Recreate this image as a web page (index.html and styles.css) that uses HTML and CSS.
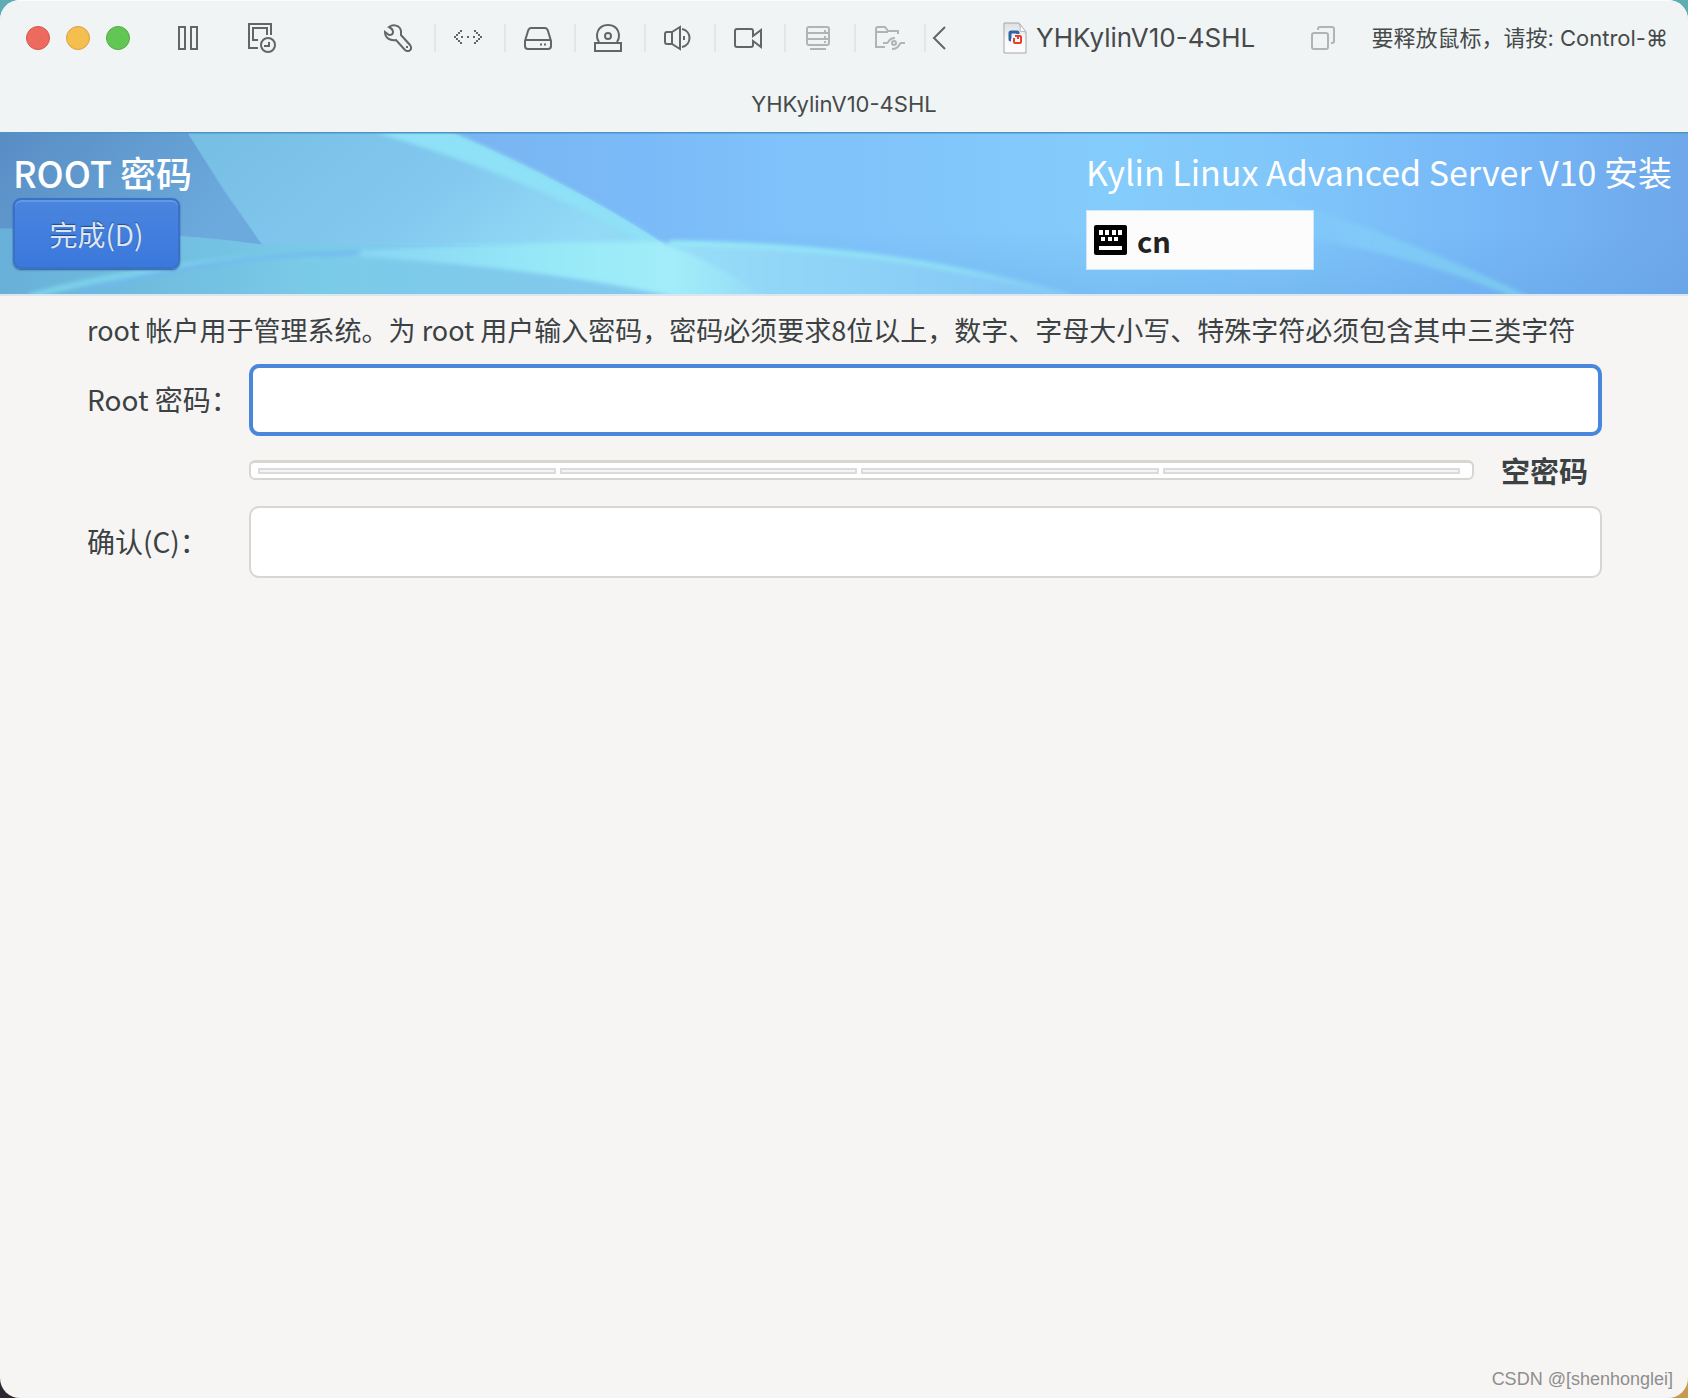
FILE: index.html
```html
<!DOCTYPE html>
<html lang="zh-CN">
<head>
<meta charset="utf-8">
<meta name="viewport" content="width=device-width, initial-scale=1">
<title>YHKylinV10-4SHL</title>
<link rel="stylesheet" href="styles.css">
</head>
<body>
<div class="window">
  <header class="chrome">
    <div class="toolbar">
      <div class="lights">
        <button class="light light-close" aria-label="关闭"></button>
        <button class="light light-min" aria-label="最小化"></button>
        <button class="light light-zoom" aria-label="缩放"></button>
      </div>
      <button class="tool tool-pause" aria-label="暂停">
        <svg width="20" height="24" viewBox="0 0 20 24"><path d="M1 1h6v22H1zM13 1h6v22h-6z"/></svg>
      </button>
      <button class="tool tool-snapshot" aria-label="快照">
        <svg width="28" height="30" viewBox="0 0 28 30"><path d="M10 25H1V1h22v11M10 17H5V5h14v7"/><circle cx="20" cy="22" r="7"/><path d="M21 19v4h-5"/></svg>
      </button>
      <div class="devices">
        <button class="device" aria-label="设置">
          <svg width="28" height="28" viewBox="0 0 28 28"><path d="M5 3C9 0 16 1 17 7L17 11L26 21C29 25 25 29 21 26L12 16C6 17 1 14 1 8L5 11Q9 11 9 8Q9 5 5 3Z"/><path d="M22 23h2"/></svg>
        </button>
        <button class="device" aria-label="网络">
          <svg width="30" height="16" viewBox="0 0 30 16"><path d="M7 1h2M5 3h2M3 5h2M1 7h2M3 9h2M5 11h2M7 13h2M8 7h2M14 7h2M20 7h2M21 1h2M23 3h2M25 5h2M27 7h2M25 9h2M23 11h2M21 13h2"/></svg>
        </button>
        <button class="device" aria-label="硬盘">
          <svg width="28" height="24" viewBox="0 0 28 24"><path d="M7 2h14q2 0 3 3l3 10v5q0 3-3 3H4q-3 0-3-3v-5L4 5q1-3 3-3zM2 14h24M16 18.500h2M20 18.500h2"/></svg>
        </button>
        <button class="device" aria-label="光盘">
          <svg width="28" height="28" viewBox="0 0 28 28"><path d="M5 18C1 12 3 1 14 1s13 11 9 17"/><circle cx="14" cy="12" r="3"/><path d="M1 19h26v8H1z"/></svg>
        </button>
        <button class="device" aria-label="声音">
          <svg width="28" height="26" viewBox="0 0 28 26"><path d="M1 9q0-2 2-2h5l8-5v22l-8-5H3q-2 0-2-2zM8 7v12M18 4c10 2 10 16 0 18M20 11v4"/></svg>
        </button>
        <button class="device" aria-label="摄像头">
          <svg width="28" height="22" viewBox="0 0 28 22"><path d="M3 2h14q2 0 2 2v5l8-6v17l-8-6v4q0 2-2 2H3q-2 0-2-2V4q0-2 2-2z"/></svg>
        </button>
        <button class="device device-off" aria-label="打印机" disabled>
          <svg width="24" height="24" viewBox="0 0 24 24"><path d="M3 1h18q2 0 2 2v14q0 2-2 2H3q-2 0-2-2V3q0-2 2-2zM1 7h22M1 13h22M4 23h16M18 5h2M18 11h2M18 16h2"/></svg>
        </button>
        <button class="device device-off device-share" aria-label="共享文件夹" disabled>
          <svg width="30" height="24" viewBox="0 0 30 24"><path d="M10 21H1V3q0-2 2-2h7l3 4h10v3M1 6h12M8 17h4c2 0 1-5 8-5M30 17h-4c-2 0-1 6-9 6"/><circle cx="19" cy="17" r="2"/></svg>
        </button>
      </div>
      <button class="tool tool-back" aria-label="收起">
        <svg width="14" height="24" viewBox="0 0 14 24"><path d="M13 1L2 12l11 11"/></svg>
      </button>
      <div class="doc">
        <svg class="doc-icon" width="24" height="32" viewBox="0 0 24 32">
          <defs><linearGradient id="page" x1="0" x2="0" y1="0" y2="1"><stop offset="0" stop-color="#dedfe0"/><stop offset=".6" stop-color="#fbfbfb"/></linearGradient></defs>
          <path class="doc-page" d="M1 1h15l7 9v21H1z"/>
          <path class="doc-fold" d="M16 1q2 4 1 8l6 1z"/>
          <path class="doc-blue" d="M8 18q-1 0-1-1v-6q0-1 1-1h6q1 0 1 1v1"/>
          <path class="doc-red" d="M16 14h1q1 0 1 1v5q0 1-1 1h-5q-1 0-1-1v-4M15 17v-3h-3"/>
        </svg>
        <span class="doc-name">YHKylinV10-4SHL</span>
      </div>
      <button class="tool tool-copy" aria-label="窗口">
        <svg width="24" height="24" viewBox="0 0 24 24"><rect x="1" y="7" width="16" height="16" rx="2"/><path d="M7 4V3q0-2 2-2h12q2 0 2 2v12q0 2-2 2h-1"/></svg>
      </button>
      <p class="hint">要释放鼠标，请按: Control-⌘</p>
    </div>
    <h1 class="title">YHKylinV10-4SHL</h1>
  </header>

  <section class="banner">
    <svg class="banner-art" viewBox="0 0 1688 161" preserveAspectRatio="none" aria-hidden="true">
      <defs>
        <linearGradient id="sky" x1="0" x2="1">
          <stop offset="0" stop-color="#62acd8"/><stop offset=".13" stop-color="#77bce4"/><stop offset=".27" stop-color="#78b4f1"/>
          <stop offset=".38" stop-color="#7bbaf8"/><stop offset=".46" stop-color="#7fc1fa"/><stop offset=".66" stop-color="#84ccfb"/>
          <stop offset=".76" stop-color="#80c6fa"/><stop offset=".88" stop-color="#77b8f8"/><stop offset="1" stop-color="#6ea8ea"/>
        </linearGradient>
        <linearGradient id="dusk" x1="0" x2="1" y2=".4">
          <stop offset="0" stop-color="#588dc4"/><stop offset="1" stop-color="#6caadd"/>
        </linearGradient>
        <linearGradient id="veil" x1="0" x2="1" y2=".3">
          <stop offset="0" stop-color="#77bee3"/><stop offset=".6" stop-color="#82c8ef"/><stop offset="1" stop-color="#92daf6"/>
        </linearGradient>
        <linearGradient id="floor" x1="0" x2="1">
          <stop offset="0" stop-color="#68b0d8"/><stop offset=".45" stop-color="#7acbe8"/><stop offset="1" stop-color="#86c8f0"/>
        </linearGradient>
        <linearGradient id="wing" x1="0" x2="1">
          <stop offset="0" stop-color="#98def8"/><stop offset="1" stop-color="#82c4f6"/>
        </linearGradient>
        <linearGradient id="edge" gradientUnits="userSpaceOnUse" x1="665" x2="1070" y1="0" y2="0">
          <stop offset="0" stop-color="#98ecf8"/><stop offset=".7" stop-color="#90e0f6"/><stop offset="1" stop-color="#80c8f4"/>
        </linearGradient>
        <linearGradient id="wedge" x1="0" x2="1">
          <stop offset="0" stop-color="#84d0f2"/><stop offset=".55" stop-color="#97e9f8"/><stop offset=".8" stop-color="#a2edf9"/><stop offset="1" stop-color="#95daf7"/>
        </linearGradient>
        <linearGradient id="ray" x1="0" x2="1">
          <stop offset="0" stop-color="#84cdfa" stop-opacity="0"/><stop offset=".45" stop-color="#82cdf9" stop-opacity=".8"/><stop offset="1" stop-color="#78c9ee"/>
        </linearGradient>
        <linearGradient id="shade" x1="0" x2="0" y1="0" y2="1">
          <stop offset=".6" stop-color="#5f9fe0" stop-opacity="0"/><stop offset="1" stop-color="#5f9fe0" stop-opacity=".3"/>
        </linearGradient>
        <filter id="soft"><feGaussianBlur stdDeviation="2"/></filter>
      </defs>
      <rect width="1688" height="161" fill="url(#sky)"/>
      <rect width="1688" height="161" fill="url(#shade)"/>
      <path d="M187 0H450Q570 50 665 112L560 118 262 112Z" fill="url(#veil)"/>
      <path d="M0 0H187L225 60 262 112Q160 98 0 96Z" fill="url(#dusk)"/>
      <path d="M0 96Q160 98 262 112L560 113 720 161H0Z" fill="url(#floor)"/>
      <g filter="url(#soft)">
        <path d="M375 0H452Q560 45 665 112L640 108Q540 50 375 0Z" fill="#8ee1f6"/>
        <path d="M665 109Q900 114 1075 165H762Q710 130 665 109Z" fill="url(#wing)"/>
        <path d="M670 110Q780 112 870 123T1070 163" fill="none" stroke="url(#edge)" stroke-width="5"/>
        <path d="M300 121Q520 108 662 109Q720 132 765 165H680Q520 130 300 121Z" fill="url(#wedge)"/>
        <path d="M30 163Q170 126 320 123" fill="none" stroke="#7dd3ea" stroke-width="6"/>
        <path d="M80 161Q190 124 360 120" fill="none" stroke="#71b7ef" stroke-width="4"/>
        <path d="M1240 55Q1400 100 1532 165H1515Q1400 115 1240 95Z" fill="url(#ray)"/>
      </g>
      <path d="M0 0H1688" stroke="#4e94c6" stroke-width="3"/>
    </svg>
    <div class="banner-left">
      <h2 class="spoke">ROOT 密码</h2>
      <button class="done">完成(D)</button>
    </div>
    <div class="banner-right">
      <p class="product">Kylin Linux Advanced Server V10 安装</p>
      <button class="layout">
        <svg width="33" height="30" viewBox="0 0 33 30" aria-hidden="true"><rect width="33" height="30" rx="2"/><path d="M5 5h4v5H5zM11 5h4v5h-4zM18 5h4v5h-4zM24 5h4v5h-4zM7 12h4v4H7zM14 12h4v4h-4zM20 12h4v4h-4zM5 21h23v4H5z"/></svg>
        <span>cn</span>
      </button>
    </div>
  </section>

  <main class="content">
    <p class="intro">root 帐户用于管理系统。为 root 用户输入密码，密码必须要求8位以上，数字、字母大小写、特殊字符必须包含其中三类字符</p>
    <form class="form">
      <label class="label" for="pw">Root 密码：</label>
      <input class="field field-active" id="pw" type="password">
      <div class="strength">
        <div class="bar" role="meter" aria-label="密码强度" aria-valuemin="0" aria-valuemax="4" aria-valuenow="0"><i></i><i></i><i></i><i></i></div>
        <strong class="status">空密码</strong>
      </div>
      <label class="label" for="confirm">确认(C)：</label>
      <input class="field" id="confirm" type="password">
    </form>
  </main>
  <footer class="mark">CSDN @[shenhonglei]</footer>
</div>
</body>
</html>
```
FILE: styles.css
```css
* { box-sizing: border-box; }

html {
  background:
    linear-gradient(#5fadb2, #5fadb2) top / 100% 50% no-repeat,
    linear-gradient(90deg, #2c2630 1%, #8a8580 3%, #c79a50 98%);
}

body {
  margin: 0;
  font-family: "Noto Sans CJK SC", sans-serif;
}

h1, h2, p { margin: 0; font-weight: 400; }

button { margin: 0; padding: 0; border: 0; background: none; font: inherit; color: inherit; }

svg { display: block; }

.window {
  display: flex;
  flex-direction: column;
  min-height: 100vh;
  border-radius: 20px;
  overflow: hidden;
  background: #f6f5f4;
}

.chrome {
  background: #f0f4f5;
  color: #464a4b;
  font-family: Inter, "Noto Sans CJK SC", sans-serif;
  box-shadow: inset 0 1px #fafcfc;
}

.toolbar {
  display: flex;
  align-items: center;
  height: 76px;
  padding: 0 20px 0 26px;
  white-space: nowrap;
}

.toolbar svg {
  fill: none;
  stroke: #626667;
  stroke-width: 2;
}

.lights { display: flex; gap: 16px; }

.light { width: 24px; height: 24px; border-radius: 50%; border: 1px solid #d9564c; background: #ed6a5f; }
.light-min { border-color: #dba040; background: #f5bf50; }
.light-zoom { border-color: #54ac43; background: #62c655; }

.tool-pause { margin-left: 48px; }
.tool-snapshot { margin-left: 50px; }

.devices { display: flex; margin-left: 90px; }

.device {
  display: flex;
  align-items: center;
  justify-content: center;
  width: 70px;
  height: 28px;
  padding-right: 4px;
  border-right: 2px solid #e2e6e7;
}

.device-share { padding-right: 0; }

.toolbar .device-off svg { stroke: #b0b4b5; }

.tool-back { margin-left: 6px; }

.doc { display: flex; align-items: center; gap: 9px; margin-left: 57px; }
.doc-name { font-size: 26px; line-height: 32px; }
.doc-icon .doc-page { fill: url(#page); stroke: #a5a7a8; stroke-width: 1; }
.doc-icon .doc-fold { fill: #ffffff; stroke: #b5b7b8; stroke-width: 1; }
.doc-icon .doc-blue { stroke: #2f62a8; stroke-width: 3; }
.doc-icon .doc-red { stroke: #e6402c; stroke-width: 2; }

.tool-copy { margin-left: auto; }
.toolbar .tool-copy svg { stroke: #b0b4b5; }

.hint {
  margin-left: 36px;
  font-size: 22px;
  line-height: 32px;
}

.title {
  height: 56px;
  font-size: 22px;
  line-height: 56px;
  text-align: center;
}

.banner {
  position: relative;
  display: flex;
  justify-content: space-between;
  min-height: 163px;
  padding: 16px 14px 24px 13px;
  border-bottom: 2px solid #dbe6ef;
  color: #fff;
}

.banner-art { position: absolute; inset: 0; width: 100%; height: 100%; }

.banner-left, .banner-right {
  position: relative;
  display: flex;
  flex-direction: column;
  align-items: flex-start;
}

.banner-right { min-width: 588px; }

.spoke { font-size: 36px; line-height: 48px; font-weight: 500; }

.done {
  width: 167px;
  height: 71px;
  margin-top: 2px;
  border: 2px solid #3b70c8;
  border-radius: 8px;
  background: linear-gradient(#4a85de, #3a78dc);
  box-shadow: inset 0 2px #6499e6, 0 1px 2px #2a5c96;
  color: #dbe5f6;
  font-size: 28px;
  line-height: 40px;
  text-shadow: 0 -1px 1px #274a86;
}

.product { font-size: 34px; line-height: 48px; }

.layout {
  display: flex;
  align-items: center;
  gap: 10px;
  width: 228px;
  height: 60px;
  margin-top: 14px;
  padding: 0 7px;
  background: #fcfcfc;
  border: 1px solid #cfe7fb;
  color: #222;
  font-size: 29px;
  line-height: 40px;
  font-weight: 700;
}

.layout rect { fill: #000; }
.layout path { fill: #fff; }

.content {
  flex: 1;
  padding: 14px 86px 40px 87px;
  color: #3c4244;
  font-size: 28px;
}

.intro { font-size: 27px; line-height: 40px; white-space: nowrap; }

.form {
  display: grid;
  grid-template-columns: 162px 1fr;
  align-items: center;
  margin-top: 14px;
}

.label { padding-bottom: 3px; line-height: 40px; }

.field {
  width: 100%;
  height: 72px;
  padding: 0 20px;
  border: 2px solid #d8d6d1;
  border-radius: 10px;
  outline: 0;
  background: #fff;
  font: inherit;
}

.field-active { border: 4px solid #4a87dc; }

.strength {
  grid-column: 2;
  display: flex;
  align-items: center;
  height: 70px;
  gap: 27px;
  padding: 0 14px 2px 0;
}

.bar {
  display: flex;
  flex: 1;
  gap: 4px;
  height: 20px;
  padding: 5px 12px 4px 7px;
  border: 2px solid #d8d6d1;
  border-top-width: 3px;
  border-radius: 6px;
  background: #fff;
}

.bar i { flex: 1; height: 6px; border: 2px solid #dadbdb; background: #f4f4f4; }

.status { font-size: 29px; line-height: 40px; }

.mark {
  padding: 0 15px 7px;
  color: #8e8e8e;
  font-family: "Liberation Sans", sans-serif;
  font-size: 18px;
  line-height: 24px;
  text-align: right;
}
```
